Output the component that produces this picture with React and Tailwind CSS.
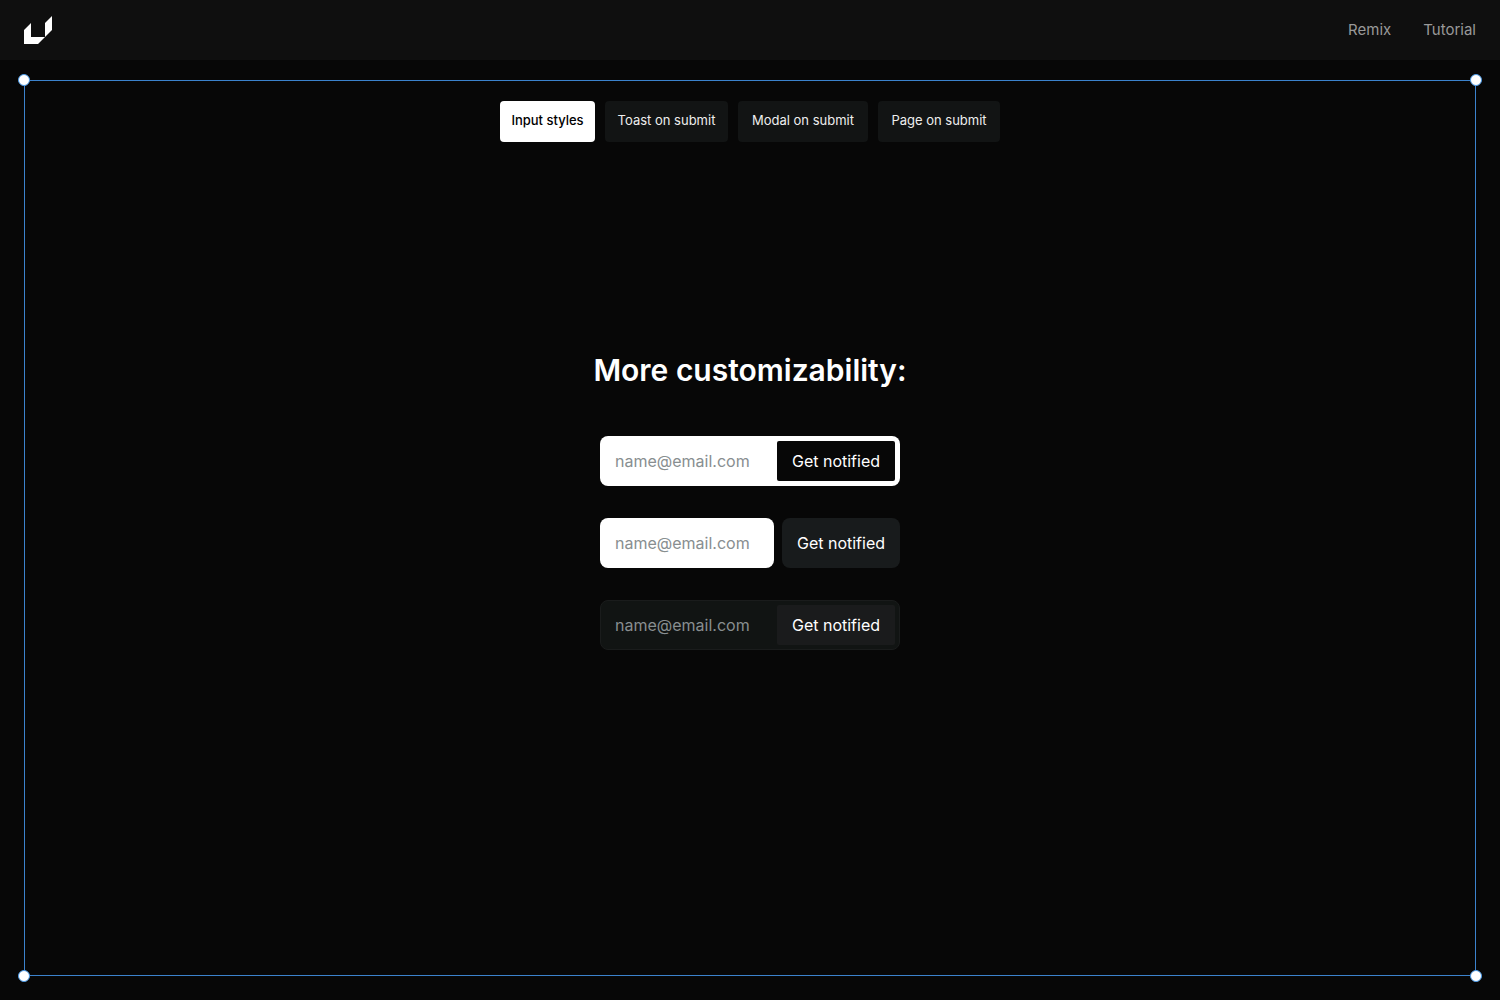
import { useState } from "react";

const tabs = [
  { label: "Input styles", width: "w-[95px]" },
  { label: "Toast on submit", width: "w-[123px]" },
  { label: "Modal on submit", width: "w-[130px]" },
  { label: "Page on submit", width: "w-[122px]" },
];

const handles = [
  "-left-[7px] -top-[7px]",
  "-right-[7px] -top-[7px]",
  "-left-[7px] -bottom-[7px]",
  "-right-[7px] -bottom-[7px]",
];

function Logo() {
  return (
    <svg width="28" height="28" viewBox="0 0 28 28" fill="white" aria-hidden="true">
      <path d="M0 14 7 7V21H21L14 28H0Z" />
      <path d="M21 7 28 0V14L21 21Z" />
    </svg>
  );
}

function EmailForm({ formClass, inputClass, buttonClass }) {
  return (
    <form
      onSubmit={(e) => e.preventDefault()}
      className={`flex h-[50px] w-[300px] text-base font-normal ${formClass}`}
    >
      <input
        type="email"
        aria-label="Email address"
        placeholder="name@email.com"
        className={`min-w-0 flex-1 outline-none placeholder:text-[#888e90] ${inputClass}`}
      />
      <button type="submit" className={`w-[118px] whitespace-nowrap text-white ${buttonClass}`}>
        Get notified
      </button>
    </form>
  );
}

export default function App() {
  const [active, setActive] = useState(0);

  return (
    <div className="flex min-h-screen flex-col bg-[#070707] font-['Inter',sans-serif] text-white">
      <header className="flex h-[60px] items-center justify-between bg-[#0f0f0f] px-6">
        <a href="#" aria-label="Home">
          <Logo />
        </a>
        <nav className="flex gap-8 text-[15px] text-[#999999]">
          <a href="#remix">Remix</a>
          <a href="#tutorial">Tutorial</a>
        </nav>
      </header>

      <main className="relative mx-6 mt-5 mb-6 flex flex-1 flex-col items-center border border-[#3b82cc] pt-5">
        {handles.map((place) => (
          <span
            key={place}
            className={`absolute size-3 rounded-full border border-[#4a9ae8] bg-white ${place}`}
          />
        ))}

        <div className="flex gap-2.5 text-[13px]">
          {tabs.map((tab, i) => (
            <button
              key={tab.label}
              type="button"
              onClick={() => setActive(i)}
              className={`h-[41px] rounded pb-0.5 whitespace-nowrap ${tab.width} ${
                i === active ? "bg-white font-medium text-black" : "bg-[#121414] text-[#eeeeee]"
              }`}
            >
              {tab.label}
            </button>
          ))}
        </div>

        <section className="flex flex-1 flex-col items-center justify-center pb-[117px]">
          <h1 className="mb-[46px] text-[30px] leading-10 font-semibold">More customizability:</h1>
          <div className="flex flex-col gap-8">
            <EmailForm
              formClass="rounded-lg bg-white p-[5px]"
              inputClass="pl-2.5 text-black"
              buttonClass="rounded-xs bg-[#070707]"
            />
            <EmailForm
              formClass="gap-2"
              inputClass="rounded-lg bg-white pl-[15px] text-black"
              buttonClass="rounded-lg bg-[#181b1c]"
            />
            <EmailForm
              formClass="rounded-lg border border-[#1a1c1c] bg-[#111413] p-1"
              inputClass="pl-2.5 text-white"
              buttonClass="rounded-xs bg-[#1a1b1c]"
            />
          </div>
        </section>
      </main>
    </div>
  );
}
